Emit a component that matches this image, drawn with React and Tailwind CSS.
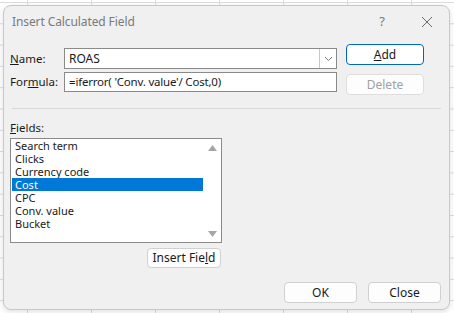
import React from 'react';

const fields = ['Search term', 'Clicks', 'Currency code', 'Cost', 'CPC', 'Conv. value', 'Bucket'];

const Btn = ({ children, className = '' }) => (
  <button
    className={`flex items-center justify-center rounded-[4px] border bg-[#fdfdfd] text-[12px] leading-none ${className}`}
  >
    {children}
  </button>
);

export default function App() {
  return (
    <div
      className="w-[454px] h-[313px] overflow-hidden bg-white bg-[linear-gradient(to_right,#dcdcdc_1px,transparent_1px),linear-gradient(to_bottom,#dcdcdc_1px,transparent_1px)] bg-[size:64px_21.3px] bg-[position:27px_2px] pt-[5px] pl-[3px]"
      style={{ fontFamily: '"Noto Sans", "Open Sans", sans-serif' }}
    >
      <div className="w-[447px] h-[305px] flex flex-col rounded-[8px] border border-[#c8c8c8] bg-[#f0f0f0] shadow-[0_2px_6px_rgba(0,0,0,0.12)] text-[#1a1a1a]">
        {/* title bar */}
        <div className="h-[32px] flex items-center pl-[8px] shrink-0">
          <span className="text-[12px] text-[#7a7a7a] tracking-[-0.1px]">Insert Calculated Field</span>
          <span className="ml-auto mr-[36px] text-[13px] text-[#7a7a7a]">?</span>
          <svg width="12" height="12" viewBox="0 0 12 12" className="mr-[16px]">
            <path d="M1 1 L11 11 M11 1 L1 11" stroke="#6a6a6a" strokeWidth="1" />
          </svg>
        </div>

        {/* name / formula */}
        <div className="flex pl-[6px]">
          <div className="flex flex-col mt-[10px] gap-[3px]">
            <div className="flex items-center h-[21px]">
              <span className="w-[54px] text-[11.5px]"><u>N</u>ame:</span>
              <div className="w-[273px] h-[21px] flex items-center bg-white border border-[#8a8a8a]">
                <span className="pl-[4px] text-[12px] flex-1">ROAS</span>
                <div className="w-[17px] h-[19px] flex items-center justify-center border-l border-[#c8c8c8] bg-white">
                  <svg width="9" height="6" viewBox="0 0 9 6">
                    <path d="M1 1 L4.5 4.5 L8 1" stroke="#777" strokeWidth="1" fill="none" />
                  </svg>
                </div>
              </div>
            </div>
            <div className="flex items-center h-[20px]">
              <span className="w-[54px] text-[11.5px]">For<u>m</u>ula:</span>
              <div className="w-[273px] h-[20px] flex items-center bg-white border border-[#8a8a8a]">
                <span className="pl-[4px] text-[11.5px] tracking-[-0.2px]">=iferror( 'Conv. value'/ Cost,0)</span>
              </div>
            </div>
          </div>
          <div className="flex flex-col ml-[9px] mt-[6px] gap-[9px]">
            <Btn className="w-[78px] h-[21px] border-[#0067c0] bg-white">
              <span><u>A</u>dd</span>
            </Btn>
            <Btn className="w-[78px] h-[21px] border-[#dedede] bg-[#f7f7f7] text-[#a0a0a0]">Delete</Btn>
          </div>
        </div>

        <div className="mt-[13px] mx-[8px] h-px bg-[#d9d9d9]" />

        {/* fields */}
        <div className="flex flex-col pl-[6px] mt-[12px]">
          <span className="h-[14px] text-[11.5px] leading-[14px]"><u>F</u>ields:</span>
          <div className="mt-[3px] w-[212px] h-[105px] flex bg-white border border-[#8a8a8a]">
            <div className="flex-1 flex flex-col pl-px">
              {fields.map((f) => (
                <div
                  key={f}
                  className={`h-[13px] leading-[13px] pl-[3px] text-[11px] overflow-hidden ${f === 'Cost' ? 'bg-[#0078d7] text-white' : ''}`}
                >
                  {f}
                </div>
              ))}
            </div>
            <div className="w-[18px] flex flex-col items-center justify-between pt-[6px] pb-[5px]">
              <svg width="9" height="6" viewBox="0 0 9 6">
                <path d="M0 6 L4.5 0 L9 6 Z" fill="#a6a6a6" />
              </svg>
              <svg width="9" height="6" viewBox="0 0 9 6">
                <path d="M0 0 L4.5 6 L9 0 Z" fill="#a6a6a6" />
              </svg>
            </div>
          </div>
          <div className="w-[212px] flex justify-end mt-[5px]">
            <Btn className="w-[74px] h-[20px] border-[#d0d0d0] mr-px">
              <span>Insert Fie<u>l</u>d</span>
            </Btn>
          </div>
        </div>

        {/* footer */}
        <div className="flex justify-end gap-[11px] pr-[8px] mt-[14px]">
          <Btn className="w-[73px] h-[21px] border-[#d0d0d0]">OK</Btn>
          <Btn className="w-[73px] h-[21px] border-[#d0d0d0]">Close</Btn>
        </div>
      </div>
    </div>
  );
}
